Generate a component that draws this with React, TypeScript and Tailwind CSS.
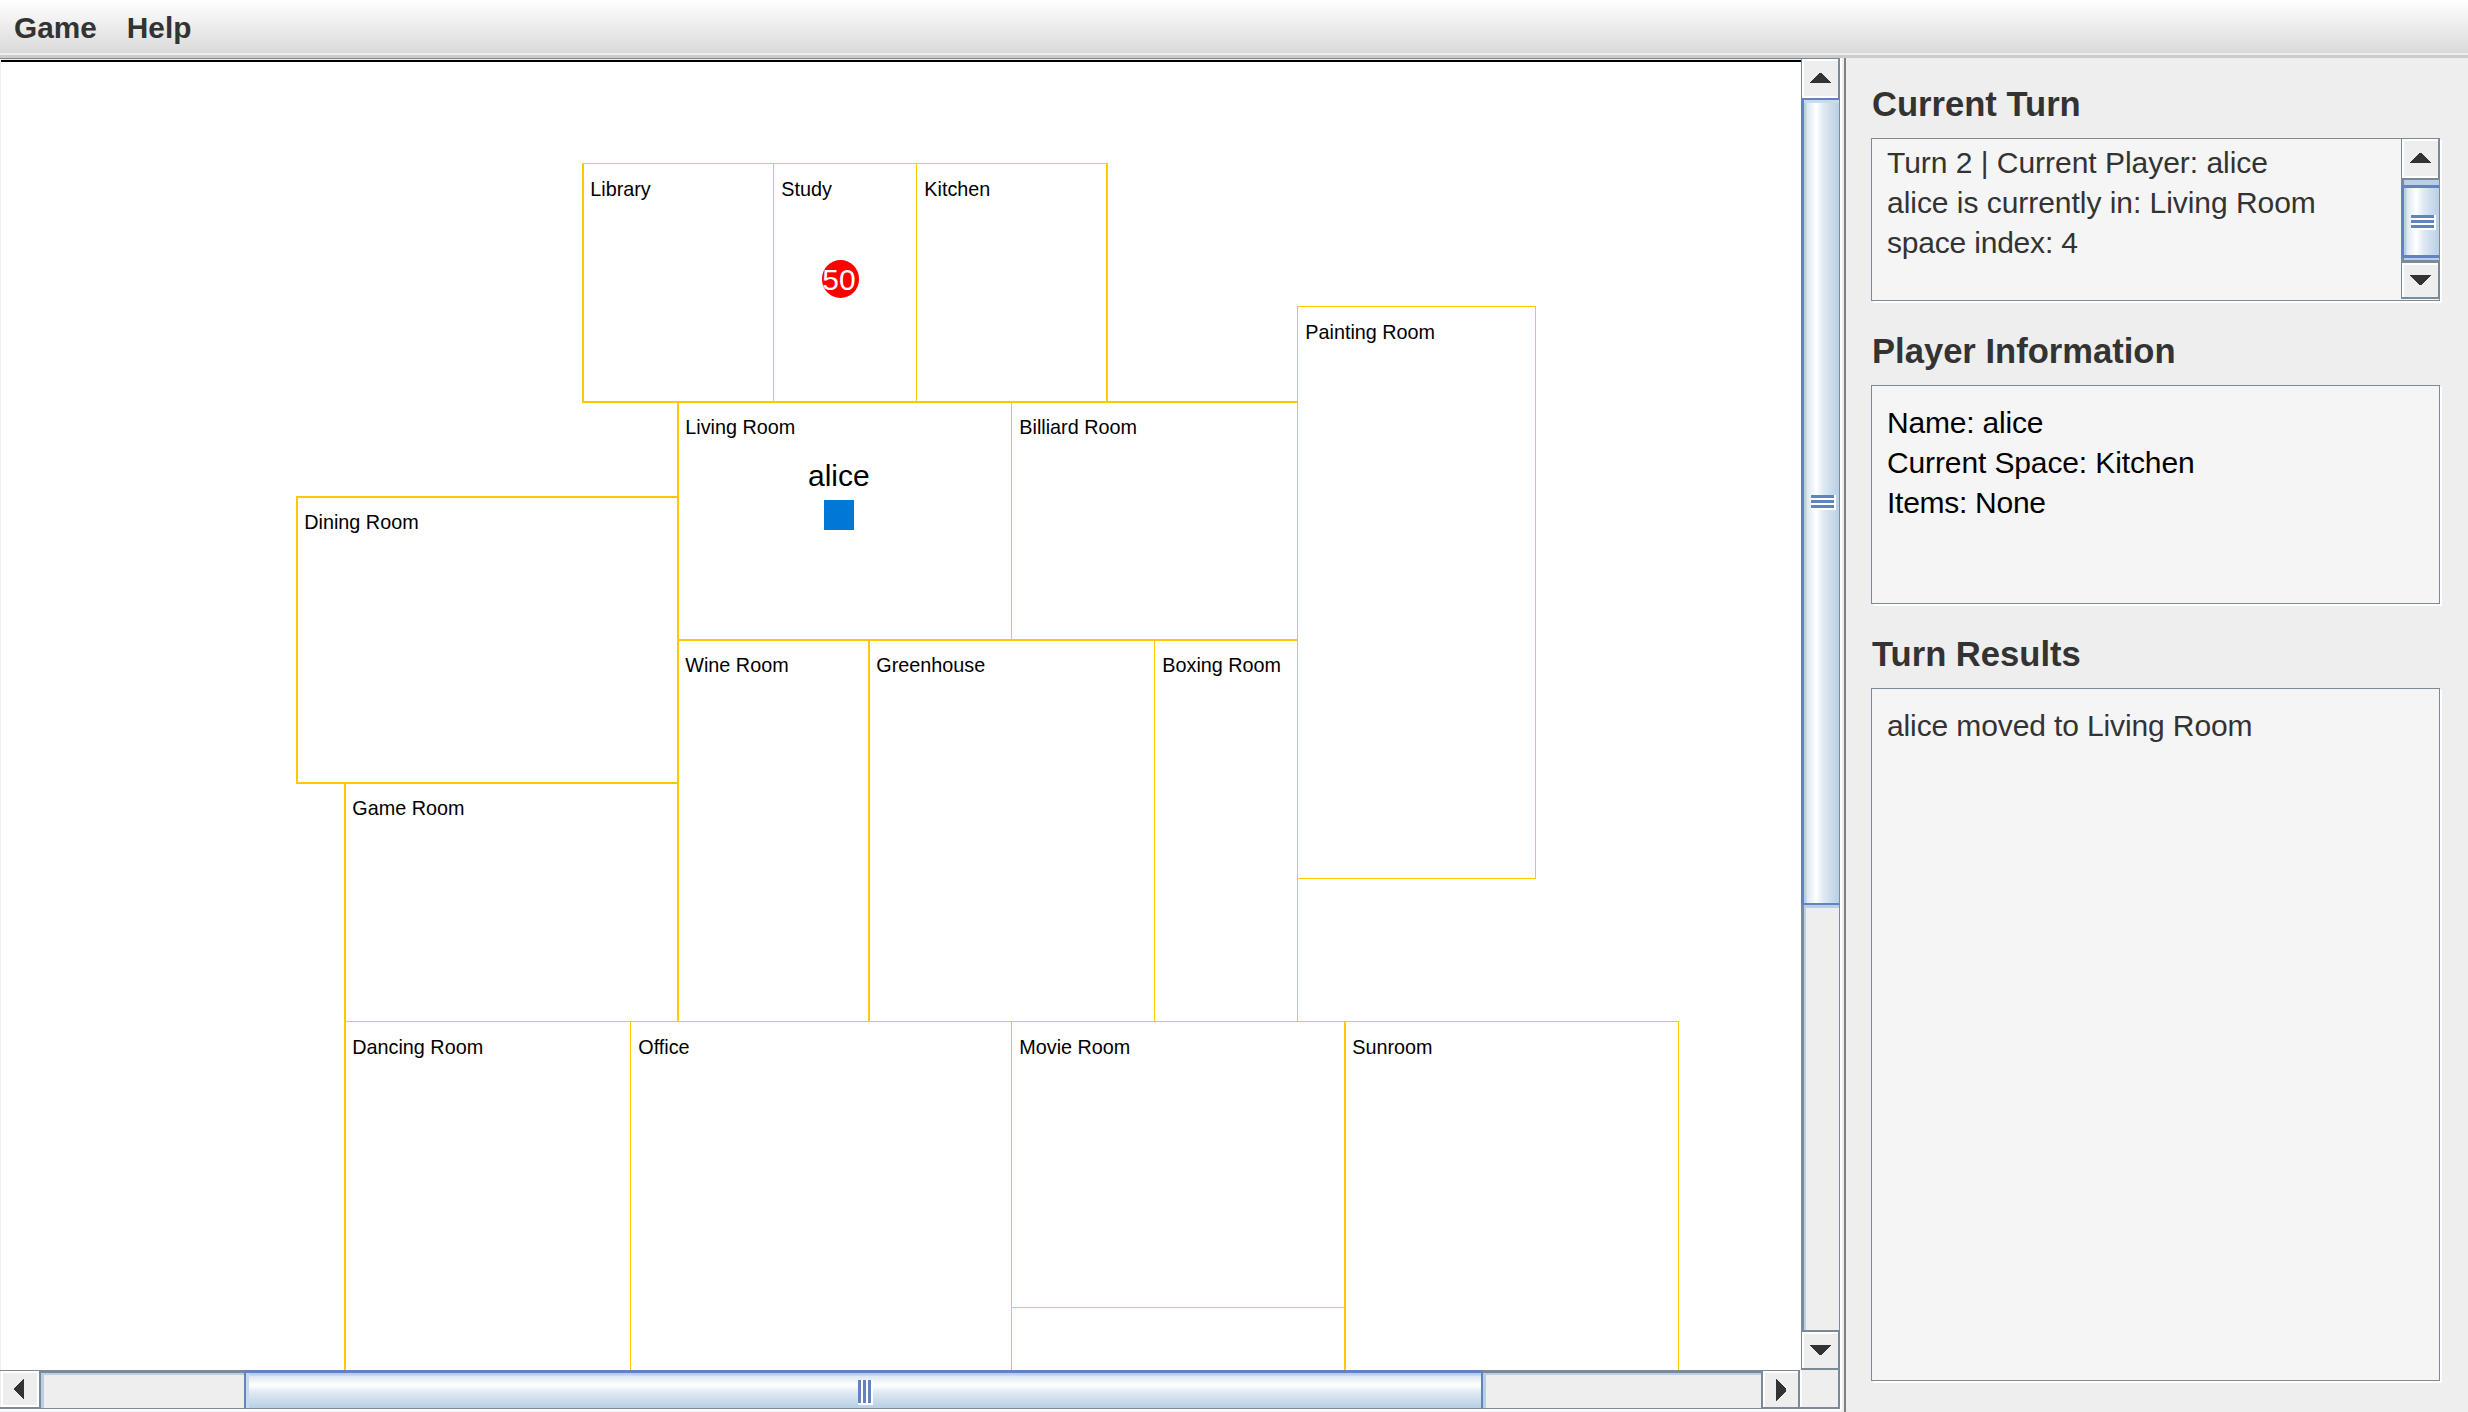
import React from "react";

type Room = { name: string; x: number; y: number; r: number; b: number };

// Room edges in map pixels: left, top, right and bottom lines.
const rooms: Room[] = [
  { name: "Library", x: 582, y: 163, r: 773, b: 401 },
  { name: "Study", x: 773, y: 163, r: 916, b: 401 },
  { name: "Kitchen", x: 916, y: 163, r: 1106, b: 401 },
  { name: "Painting Room", x: 1297, y: 306, r: 1535, b: 878 },
  { name: "Living Room", x: 677, y: 401, r: 1011, b: 639 },
  { name: "Billiard Room", x: 1011, y: 401, r: 1297, b: 639 },
  { name: "Dining Room", x: 296, y: 496, r: 677, b: 782 },
  { name: "Wine Room", x: 677, y: 639, r: 868, b: 1021 },
  { name: "Greenhouse", x: 868, y: 639, r: 1154, b: 1021 },
  { name: "Boxing Room", x: 1154, y: 639, r: 1297, b: 1021 },
  { name: "Game Room", x: 344, y: 782, r: 677, b: 1021 },
  { name: "Dancing Room", x: 344, y: 1021, r: 630, b: 1450 },
  { name: "Office", x: 630, y: 1021, r: 1011, b: 1450 },
  { name: "Movie Room", x: 1011, y: 1021, r: 1344, b: 1307 },
  { name: "", x: 1011, y: 1307, r: 1344, b: 1450 },
  { name: "Sunroom", x: 1344, y: 1021, r: 1678, b: 1450 },
];

const wideX = [296, 344, 582, 677, 868, 1106, 1344];
const wideY = [401, 496, 639, 782];
const lineX = (v: number) => (wideX.includes(v) ? 2 : 1);
const lineY = (v: number) => (wideY.includes(v) ? 2 : 1);

const MAP_LEFT = 1;
const MAP_TOP = 60;

function RoomBox({ room }: { room: Room }) {
  return (
    <div
      className="absolute border-[#ffc800] text-[19.8px] leading-6 whitespace-nowrap text-black"
      style={{
        left: room.x - MAP_LEFT,
        top: room.y - MAP_TOP,
        width: room.r + lineX(room.r) - room.x,
        height: room.b + lineY(room.b) - room.y,
        borderLeftWidth: lineX(room.x),
        borderRightWidth: lineX(room.r),
        borderTopWidth: lineY(room.y),
        borderBottomWidth: lineY(room.b),
        paddingLeft: 8.3 - lineX(room.x),
        paddingTop: 14 - lineY(room.y),
      }}
    >
      {room.name}
    </div>
  );
}

function GripV() {
  return (
    <div className="flex flex-col">
      {[0, 1, 2].map((i) => (
        <div key={i} className="h-[5px] w-[25px] bg-white pr-[2px] pb-[2px]">
          <div className="h-[3px] bg-[#6382bf]" />
        </div>
      ))}
    </div>
  );
}

function GripH() {
  return (
    <div className="flex">
      {[0, 1, 2].map((i) => (
        <div key={i} className="h-[25px] w-[5px] bg-white pr-[2px] pb-[2px]">
          <div className="h-[23px] bg-[#6382bf]" />
        </div>
      ))}
    </div>
  );
}

const arrowPaths = {
  up: "M10 0H12L22 10H0Z",
  down: "M0 0H22L12 10H10Z",
};

function VArrow({ dir }: { dir: "up" | "down" }) {
  return (
    <svg width="22" height="10" viewBox="0 0 22 10" className="block" shapeRendering="crispEdges">
      <path d={arrowPaths[dir]} fill="#333" />
    </svg>
  );
}

function HArrow({ flip }: { flip?: boolean }) {
  return (
    <svg width="10" height="22" viewBox="0 0 10 22" className="block" shapeRendering="crispEdges">
      <path d={flip ? "M0 0V22L10 12V10Z" : "M10 0V22L0 12V10Z"} fill="#333" />
    </svg>
  );
}

function MapScrollV() {
  return (
    <div className="flex h-[1312px] w-[39px] flex-none flex-col">
      <div className="flex h-10 flex-none items-start border-t border-r-2 border-l border-[#7a8a99]">
        <div className="flex h-[39px] w-full border-t-2 border-b-2 border-l-2 border-white pt-3 pl-[5px]">
          <VArrow dir="up" />
        </div>
      </div>
      <div className="flex h-[810px] flex-none flex-col">
        <div className="flex h-[807px] items-center justify-center border-y-2 border-r border-l-[3px] border-y-[#6382bf] border-r-[#7a8a99] border-l-[#6382bf] bg-[linear-gradient(90deg,#b8cfe5_0,#b8cfe5_2px,#dbe7f2_3px,#ffffff_12px,#dde8f3_20px,#b8cfe5_35px)] pt-[2px] pl-1 shadow-[inset_0_3px_0_#c8daeb]">
          <GripV />
        </div>
        <div className="h-[3px] border-r border-l-[3px] border-[#7a8a99] bg-[#b8cfe5]" />
      </div>
      <div className="flex-1 border-r border-l-[3px] border-[#7a8a99] shadow-[inset_2px_0_0_#b8cfe5]" />
      <div className="h-10 flex-none border-t-2 border-r-2 border-b-2 border-l border-[#7a8a99]">
        <div className="flex h-full border-t-2 border-l-2 border-white pt-[11px] pl-[5px]">
          <VArrow dir="down" />
        </div>
      </div>
    </div>
  );
}

function MapScrollH() {
  return (
    <div className="flex h-[39px] w-full flex-none">
      <div className="h-[39px] w-[39px] flex-none border-t border-b-2 border-[#7a8a99] pl-px">
        <div className="flex h-full items-center border-2 border-white pb-px pl-[11px]">
          <HArrow />
        </div>
      </div>
      <div className="w-[205px] flex-none border-t-[3px] border-b border-l-2 border-[#7a8a99] shadow-[inset_3px_2px_0_#b8cfe5]" />
      <div className="flex w-[1239px] flex-none items-center justify-center border-x-2 border-t-[3px] border-b border-x-[#6382bf] border-t-[#6382bf] border-b-[#7a8a99] bg-[linear-gradient(180deg,#b8cfe5_0,#b8cfe5_2px,#dbe7f2_3px,#ffffff_12px,#dde8f3_20px,#b8cfe5_35px)] pt-1 pl-1 shadow-[inset_3px_0_0_#c8daeb]">
        <GripH />
      </div>
      <div className="flex-1 border-t-[3px] border-r-2 border-b border-[#7a8a99] shadow-[inset_3px_2px_0_#b8cfe5]" />
      <div className="h-[39px] w-[37px] flex-none border-t border-r-2 border-b-2 border-[#7a8a99]">
        <div className="flex h-full items-center border-t-2 border-l-2 border-white pb-px pl-[11px]">
          <HArrow flip />
        </div>
      </div>
      <div className="h-[39px] w-10 flex-none border-r-2 border-b-2 border-[#7a8a99]">
        <div className="h-full border-l-2 border-white" />
      </div>
    </div>
  );
}

function TurnScroll() {
  return (
    <div className="flex h-[161px] w-[38px] flex-none flex-col">
      <div className="h-[39px] flex-none border-r border-l border-[#7a8a99] bg-[#eee]">
        <div className="flex h-full border-2 border-r-0 border-white pt-3 pl-[5px]">
          <VArrow dir="up" />
        </div>
      </div>
      <div className="h-[7px] flex-none border-t-2 border-l-[3px] border-[#7a8a99] bg-[#b8cfe5]" />
      <div className="flex h-[73px] flex-none items-center justify-center border-y-[3px] border-l-[3px] border-[#6382bf] bg-[linear-gradient(90deg,#b8cfe5_0,#b8cfe5_2px,#dbe7f2_3px,#ffffff_12px,#dde8f3_20px,#b8cfe5_35px)] pt-[2px] pl-[4px]">
        <GripV />
      </div>
      <div className="h-[5px] flex-none border-b-[3px] border-l-[3px] border-[#7a8a99] bg-[#b8cfe5]" />
      <div className="h-[36px] flex-none border-r border-b-2 border-l border-[#7a8a99] bg-[#eee]">
        <div className="flex h-full border-t-2 border-l-2 border-white pt-[10px] pl-[5px]">
          <VArrow dir="down" />
        </div>
      </div>
    </div>
  );
}

function Heading({ children }: { children: React.ReactNode }) {
  return <h2 className="h-10 pl-px text-[34.6px] leading-10 font-bold whitespace-nowrap text-[#333]">{children}</h2>;
}

export default function App() {
  return (
    <div className="flex h-[1412px] w-[2468px] flex-col overflow-hidden bg-[#eee] font-['Liberation_Sans',Arial,sans-serif]">
      <header className="flex h-[58px] flex-none flex-col">
        <nav className="flex h-[53px] items-start gap-[30px] bg-linear-to-b from-white to-[#dadada] pt-[8px] pl-[14px] text-[29.8px] leading-10 font-bold text-[#333]">
          <span>Game</span>
          <span>Help</span>
        </nav>
        <div className="h-[2px] bg-[#eee]" />
        <div className="h-[3px] bg-[#ccc]" />
      </header>

      <div className="flex flex-1">
        <main className="flex h-[1354px] w-[1840px] flex-none flex-col">
          <div className="flex h-[1312px] flex-none">
            <div className="flex h-[1312px] w-[1801px] flex-none flex-col border-t border-[#7a8a99] pl-px">
              <div className="h-px bg-[#eee]" />
              <div className="relative h-[1310px] overflow-hidden bg-white">
                <div className="h-[2px] bg-black" />
                {rooms.map((room) => (
                  <RoomBox key={`${room.x}-${room.y}`} room={room} />
                ))}
                <div className="absolute top-[200px] left-[821px] flex h-[38px] w-[37px] items-center justify-center rounded-full bg-[#ff0000] pt-px pr-[3px] text-[30px] leading-10 text-white">
                  50
                </div>
                <div className="absolute top-[396px] left-[807px] text-[30px] leading-10 text-black">alice</div>
                <div className="absolute top-[440px] left-[823px] h-[30px] w-[30px] bg-[#0078d7]" />
              </div>
            </div>
            <MapScrollV />
          </div>
          <MapScrollH />
          <div className="h-[2px] bg-white" />
        </main>

        <div className="flex w-[6px] flex-none">
          <div className="mr-[2px] h-[1353px] w-[2px] bg-white" />
          <div className="w-[2px] bg-[#808080]" />
        </div>

        <aside className="flex flex-col pt-[26px] pl-[25px] text-[30px] leading-10 text-[#333]">
          <Heading>Current Turn</Heading>
          <section className="mt-[14px] flex h-[163px] w-[569px] border border-[#7a8a99] bg-[#f5f5f5] shadow-[2px_2px_0_#fff]">
            <div className="flex-1 pt-1 pl-[15px] whitespace-nowrap">
              <p className="tracking-[-0.03px]">Turn 2 | Current Player: alice</p>
              <p className="tracking-[-0.04px]">alice is currently in: Living Room</p>
              <p className="tracking-[-0.2px]">space index: 4</p>
            </div>
            <TurnScroll />
          </section>

          <div className="mt-[30px]">
            <Heading>Player Information</Heading>
          </div>
          <section className="mt-[14px] h-[219px] w-[569px] border border-[#7a8a99] bg-[#f5f5f5] pt-[17px] pl-[15px] text-black shadow-[2px_2px_0_#fff]">
            <p className="tracking-[-0.2px]">Name: alice</p>
            <p className="tracking-[-0.12px]">Current Space: Kitchen</p>
            <p className="tracking-[-0.27px]">Items: None</p>
          </section>

          <div className="mt-[30px]">
            <Heading>Turn Results</Heading>
          </div>
          <section className="mt-[14px] h-[693px] w-[569px] border border-[#7a8a99] bg-[#f5f5f5] pt-[17px] pl-[15px] shadow-[2px_2px_0_#fff]">
            <p className="tracking-[-0.12px]">alice moved to Living Room</p>
          </section>
        </aside>
      </div>
    </div>
  );
}
